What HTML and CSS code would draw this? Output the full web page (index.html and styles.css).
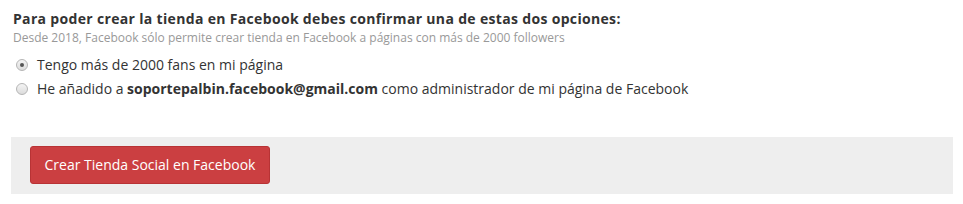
FILE: index.html
```html
<!DOCTYPE html>
<html>
<head>
<meta charset="utf-8">
<link rel="stylesheet" href="styles.css">
</head>
<body>
<div class="wrap">
  <div class="title">Para poder crear la tienda en Facebook debes confirmar una de estas dos opciones:</div>
  <div class="sub">Desde 2018, Facebook sólo permite crear tienda en Facebook a páginas con más de 2000 followers</div>
  <div class="opts">
    <label class="opt"><span class="radio checked"></span>Tengo más de 2000 fans en mi página</label>
    <label class="opt"><span class="radio"></span>He añadido a&nbsp;<b>soportepalbin.facebook@gmail.com</b>&nbsp;como administrador de mi página de Facebook</label>
  </div>
  <div class="panel">
    <button class="btn">Crear Tienda Social en Facebook</button>
  </div>
</div>
</body>
</html>
```
FILE: styles.css
```css
html, body { margin: 0; padding: 0; background: #fff; }
body { font-family: "Open Sans", "DejaVu Sans", sans-serif; color: #333; }
.wrap { padding: 9px 10px 0 11px; }
.title { font-size: 14px; font-weight: 700; line-height: 20px; padding-left: 2px; color: #333; letter-spacing: 0.33px; }
.sub { font-size: 12px; line-height: 16px; color: #999; padding-left: 2px; margin-top: 1px; }
.opts { margin-top: 9px; display: flex; flex-direction: column; gap: 4px; padding-left: 5px; }
.opt { display: flex; align-items: center; font-size: 14px; line-height: 20px; color: #333; }
.opt b { font-weight: 700; }
.radio { width: 10px; height: 10px; border-radius: 50%; border: 1px solid #b5b5b5; background: linear-gradient(#f4f4f4, #dcdcdc); margin-right: 9px; position: relative; box-sizing: content-box; }
.radio.checked::after { content: ""; position: absolute; left: 3px; top: 3px; width: 4px; height: 4px; border-radius: 50%; background: #555; }
.panel { margin-top: 38px; background: #eee; height: 57px; padding: 9px 19px; box-sizing: border-box; width: 942px; }
.btn { font-family: "Open Sans", "DejaVu Sans", sans-serif; font-size: 14px; color: #fff; background: #cb3f41; border: 1px solid #b83335; border-radius: 3px; height: 38px; width: 240px; padding: 0; line-height: 36px; }
```
